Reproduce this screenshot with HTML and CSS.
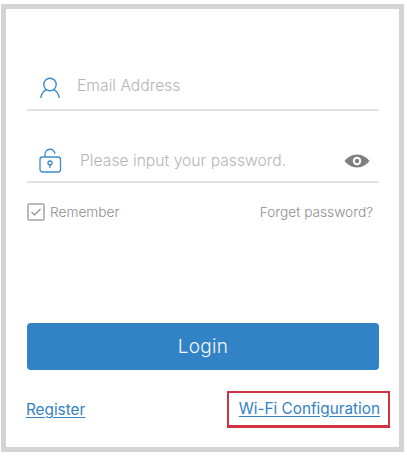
FILE: index.html
```html
<!DOCTYPE html>
<html lang="en">
<head>
<meta charset="utf-8">
<title>Login</title>
<link rel="stylesheet" href="styles.css">
</head>
<body>
<main class="frame">
  <div class="field field-email">
    <svg class="icon-user" width="22" height="22" viewBox="0 0 22 22" fill="none" stroke="#3a8ad0" stroke-width="1.4"><circle cx="11" cy="7.5" r="6.2"/><path d="M1.8 21c.3-4.600 3.600-7.800 5.600-8.200M20.200 21c-.3-4.600-3.600-7.800-5.600-8.200"/></svg>
    <span class="placeholder">Email Address</span>
  </div>
  <div class="field field-pass">
    <svg class="icon-lock" width="23" height="25" viewBox="0 0 23 25" fill="none" stroke="#3a8ad0" stroke-width="1.3"><path d="M6 9V6.500a5 5 0 0 1 10-.5"/><rect x="1" y="9" width="20.500" height="15" rx="2.500"/><circle cx="11" cy="15" r="2"/><path d="M11 17v3"/></svg>
    <span class="placeholder pass-text">Please input your password.</span>
    <svg class="icon-eye" width="26" height="16" viewBox="0 0 26 16"><path fill="#808080" d="M13 1.500c5.500 0 9.800 3 12.500 6.500-2.700 3.500-7 6.500-12.500 6.500S3.200 11.500.5 8C3.200 4.500 7.500 1.500 13 1.500z"/><circle cx="13" cy="8" r="4.200" fill="#fff"/><circle cx="13" cy="8" r="2.200" fill="#808080"/></svg>
  </div>
  <div class="options">
    <span class="remember">
      <svg class="check" width="18" height="18" viewBox="0 0 18 18" fill="none"><rect x="1" y="1" width="16" height="16" rx="1.500" stroke="#a3a3a3" stroke-width="1.500"/><path d="M4.500 9l3 3 6-6" stroke="#8c8c8c" stroke-width="1.200"/></svg>
      <span>Remember</span>
    </span>
    <span class="forget">Forget password?</span>
  </div>
  <button class="login" type="button">Login</button>
  <div class="links">
    <a class="link link-register" href="#">Register</a>
    <span class="highlight"><a class="link" href="#">Wi-Fi Configuration</a></span>
  </div>
</main>
</body>
</html>
```
FILE: styles.css
```css
* { box-sizing: border-box; }
html, body { margin: 0; padding: 0; background: #fff; }
body { width: 407px; height: 457px; padding: 4px 3px 5px 1px; font-family: "Inter", "Liberation Sans", sans-serif; }
.frame {
  width: 403px;
  height: 448px;
  border: 5px solid #d4d4d4;
  padding: 0 21px;
  display: flex;
  flex-direction: column;
}
.field {
  border-bottom: 2px solid #e2e2e2;
  display: flex;
  align-items: center;
  margin-right: -1px;
}
.field-email { margin-top: 64px; height: 38px; padding-left: 12px; padding-bottom: 6px; }
.field-pass { margin-top: 34px; height: 38px; padding-left: 12px; padding-bottom: 5px; }
.placeholder { font-size: 15.7px; color: #b5b5b5; font-weight: 300; white-space: nowrap; }
.field-email .placeholder { margin-bottom: 5px; }
.icon-user { margin-right: 16px; }
.icon-lock { margin-right: 18px; }
.pass-text { flex: 1; }
.icon-eye { margin-right: 9px; }
.options {
  margin-top: 20px;
  display: flex;
  justify-content: space-between;
  align-items: center;
  padding-right: 5px;
  font-size: 13.7px;
  font-weight: 300;
  color: #8e8e8e;
}
.remember { display: flex; align-items: center; gap: 5px; }
.check { display: block; }
.login {
  margin-top: 102px;
  height: 47px;
  width: 352px;
  border: 0;
  border-radius: 4px;
  background: #3282c6;
  color: #f2f7fb;
  font: 300 19px "Inter", "Liberation Sans", sans-serif;
  letter-spacing: .3px;
}
.links {
  margin-top: 21px;
  display: flex;
  justify-content: space-between;
  align-items: center;
  font-size: 15.3px;
}
.link { color: #3282c6; text-decoration: underline; text-underline-offset: 2px; }
.link-register { margin-left: -1px; }
.highlight {
  border: 2px solid #cf3341;
  border-bottom-width: 3px;
  margin-right: -12px;
  padding: 6px 8px 6px 10px;
  line-height: 20px;
  height: 37px;
}
```
